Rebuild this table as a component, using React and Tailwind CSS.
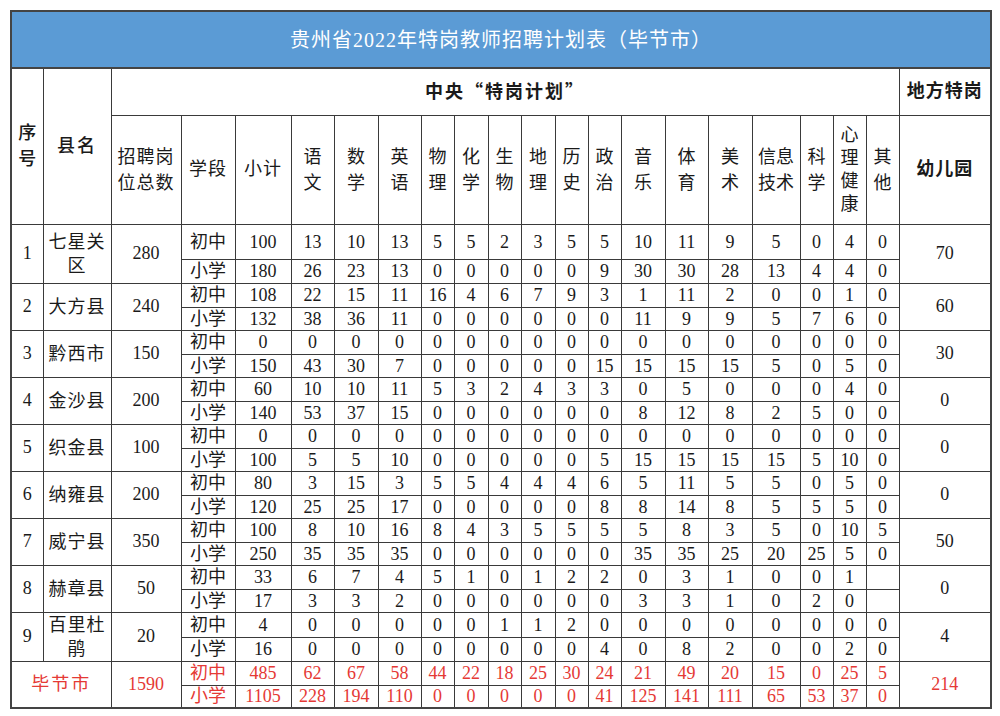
import React from "react";

const FONT = "font-['Liberation_Serif','Noto_Sans_CJK_SC',serif]";
const CJK = "font-['Noto_Sans_CJK_SC',sans-serif]";

const colWidths = [32, 68, 70, 54, 56, 43, 44, 43, 33, 34, 33, 34, 33, 33, 44, 43, 44, 48, 33, 33, 33, 92];

const subjects = [
  ["语", "文"],
  ["数", "学"],
  ["英", "语"],
  ["物", "理"],
  ["化", "学"],
  ["生", "物"],
  ["地", "理"],
  ["历", "史"],
  ["政", "治"],
  ["音", "乐"],
  ["体", "育"],
  ["美", "术"],
  ["信息", "技术"],
  ["科", "学"],
  ["心", "理", "健", "康"],
  ["其", "他"],
];

const zeros = Array(17).fill(0);

const counties = [
  {
    no: 1,
    name: ["七星关", "区"],
    total: 280,
    local: 70,
    mid: [100, 13, 10, 13, 5, 5, 2, 3, 5, 5, 10, 11, 9, 5, 0, 4, 0],
    pri: [180, 26, 23, 13, 0, 0, 0, 0, 0, 9, 30, 30, 28, 13, 4, 4, 0],
  },
  {
    no: 2,
    name: ["大方县"],
    total: 240,
    local: 60,
    mid: [108, 22, 15, 11, 16, 4, 6, 7, 9, 3, 1, 11, 2, 0, 0, 1, 0],
    pri: [132, 38, 36, 11, 0, 0, 0, 0, 0, 0, 11, 9, 9, 5, 7, 6, 0],
  },
  {
    no: 3,
    name: ["黔西市"],
    total: 150,
    local: 30,
    mid: zeros,
    pri: [150, 43, 30, 7, 0, 0, 0, 0, 0, 15, 15, 15, 15, 5, 0, 5, 0],
  },
  {
    no: 4,
    name: ["金沙县"],
    total: 200,
    local: 0,
    mid: [60, 10, 10, 11, 5, 3, 2, 4, 3, 3, 0, 5, 0, 0, 0, 4, 0],
    pri: [140, 53, 37, 15, 0, 0, 0, 0, 0, 0, 8, 12, 8, 2, 5, 0, 0],
  },
  {
    no: 5,
    name: ["织金县"],
    total: 100,
    local: 0,
    mid: zeros,
    pri: [100, 5, 5, 10, 0, 0, 0, 0, 0, 5, 15, 15, 15, 15, 5, 10, 0],
  },
  {
    no: 6,
    name: ["纳雍县"],
    total: 200,
    local: 0,
    mid: [80, 3, 15, 3, 5, 5, 4, 4, 4, 6, 5, 11, 5, 5, 0, 5, 0],
    pri: [120, 25, 25, 17, 0, 0, 0, 0, 0, 8, 8, 14, 8, 5, 5, 5, 0],
  },
  {
    no: 7,
    name: ["威宁县"],
    total: 350,
    local: 50,
    mid: [100, 8, 10, 16, 8, 4, 3, 5, 5, 5, 5, 8, 3, 5, 0, 10, 5],
    pri: [250, 35, 35, 35, 0, 0, 0, 0, 0, 0, 35, 35, 25, 20, 25, 5, 0],
  },
  {
    no: 8,
    name: ["赫章县"],
    total: 50,
    local: 0,
    mid: [33, 6, 7, 4, 5, 1, 0, 1, 2, 2, 0, 3, 1, 0, 0, 1, ""],
    pri: [17, 3, 3, 2, 0, 0, 0, 0, 0, 0, 3, 3, 1, 0, 2, 0, ""],
  },
  {
    no: 9,
    name: ["百里杜", "鹃"],
    total: 20,
    local: 4,
    mid: [4, 0, 0, 0, 0, 0, 1, 1, 2, 0, 0, 0, 0, 0, 0, 0, 0],
    pri: [16, 0, 0, 0, 0, 0, 0, 0, 0, 4, 0, 8, 2, 0, 0, 2, 0],
  },
];

const summary = {
  mid: [485, 62, 67, 58, 44, 22, 18, 25, 30, 24, 21, 49, 20, 15, 0, 25, 5],
  pri: [1105, 228, 194, 110, 0, 0, 0, 0, 0, 41, 125, 141, 111, 65, 53, 37, 0],
};

const cell = "border border-[#3a3a3a] p-0 text-center align-middle";

const Stacked = ({ lines, lh = "leading-[24px]" }) => (
  <div className={lh}>
    {lines.map((l, i) => (
      <div key={i}>{l}</div>
    ))}
  </div>
);

const CountyRows = ({ c }) => {
  const tall = c.no === 1;
  return (
    <>
      <tr className={tall ? "h-[35px]" : "h-[24px]"}>
        <td rowSpan={2} className={cell}>{c.no}</td>
        <td rowSpan={2} className={`${cell} tracking-[1px]`}>
          <Stacked lines={c.name} />
        </td>
        <td rowSpan={2} className={cell}>{c.total}</td>
        <td className={`${cell} leading-none`}>初中</td>
        {c.mid.map((v, i) => (
          <td key={i} className={`${cell} leading-none`}>{v}</td>
        ))}
        <td rowSpan={2} className={cell}>{c.local}</td>
      </tr>
      <tr className={tall ? "h-[24px]" : "h-[23px]"}>
        <td className={`${cell} leading-none`}>小学</td>
        {c.pri.map((v, i) => (
          <td key={i} className={`${cell} leading-none`}>{v}</td>
        ))}
      </tr>
    </>
  );
};

export default function App() {
  return (
    <div className={`w-[1000px] h-[716px] bg-white p-[10px] ${FONT} text-[18px] text-[#1a1a1a]`}>
      <table className="table-fixed border-collapse border-2 border-[#444] w-[980px]">
        <colgroup>
          {colWidths.map((w, i) => (
            <col key={i} style={{ width: w }} />
          ))}
        </colgroup>
        <tbody>
          <tr className="h-[57px]">
            <td colSpan={22} className="border-2 border-[#444] bg-[#5b9bd5] text-center text-white text-[20px] tracking-[1px]">
              贵州省2022年特岗教师招聘计划表（毕节市）
            </td>
          </tr>
          <tr className="h-[47px]">
            <td rowSpan={2} className={`${cell} font-medium`}>
              <Stacked lines={["序", "号"]} lh="leading-[26px]" />
            </td>
            <td rowSpan={2} className={`${cell} tracking-[2px] font-medium`}>县名</td>
            <td colSpan={19} className={`${cell} font-bold tracking-[2px]`}>
              中央<span className={CJK}>“</span>特岗计划<span className={CJK}>”</span>
            </td>
            <td className={`${cell} font-bold tracking-[1px]`}>地方特岗</td>
          </tr>
          <tr className="h-[109px]">
            <td className={`${cell} tracking-[1px]`}>
              <Stacked lines={["招聘岗", "位总数"]} lh="leading-[26px]" />
            </td>
            <td className={`${cell} tracking-[1px]`}>学段</td>
            <td className={`${cell} tracking-[1px]`}>小计</td>
            {subjects.map((s, i) => (
              <td key={i} className={cell}>
                <Stacked lines={s} lh={s.length === 4 ? "leading-[23px]" : "leading-[26px]"} />
              </td>
            ))}
            <td className={`${cell} font-bold tracking-[1px]`}>幼儿园</td>
          </tr>
          {counties.map((c) => (
            <CountyRows key={c.no} c={c} />
          ))}
          <tr className="h-[24px] text-[#e53935]">
            <td colSpan={2} rowSpan={2} className={`${cell} tracking-[2px]`}>毕节市</td>
            <td rowSpan={2} className={cell}>1590</td>
            <td className={`${cell} leading-none`}>初中</td>
            {summary.mid.map((v, i) => (
              <td key={i} className={`${cell} leading-none`}>{v}</td>
            ))}
            <td rowSpan={2} className={cell}>214</td>
          </tr>
          <tr className="h-[23px] text-[#e53935]">
            <td className={`${cell} leading-none`}>小学</td>
            {summary.pri.map((v, i) => (
              <td key={i} className={`${cell} leading-none`}>{v}</td>
            ))}
          </tr>
        </tbody>
      </table>
    </div>
  );
}
